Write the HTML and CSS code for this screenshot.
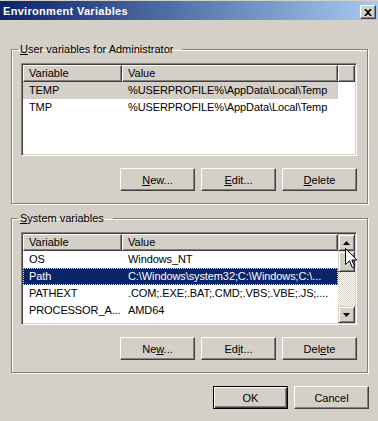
FILE: index.html
```html
<!DOCTYPE html>
<html lang="en">
<head>
    <meta charset="UTF-8">
    <title>Environment Variables</title>
    <link rel="stylesheet" href="styles.css">
</head>
<body>
    <div class="window">
        <div class="titlebar">
            <span class="title">Environment Variables</span>
            <span class="close">
                <svg width="8" height="7" viewBox="0 0 8 7"><path d="M0 0h2l2 2 2-2h2L5 3.5 8 7H6L4 5 2 7H0l3-3.5z" fill="#000"/></svg>
            </span>
        </div>

        <div class="content">
            <fieldset class="group">
                <legend><u>U</u>ser variables for Administrator</legend>
                <div class="list">
                    <div class="list-main">
                        <div class="head">
                            <div class="hcell c1">Variable</div>
                            <div class="hcell c2">Value</div>
                            <div class="hcell filler"></div>
                        </div>
                        <div class="row inactive">
                            <div class="cell c1">TEMP</div>
                            <div class="cell c2">%USERPROFILE%\AppData\Local\Temp</div>
                        </div>
                        <div class="row">
                            <div class="cell c1">TMP</div>
                            <div class="cell c2">%USERPROFILE%\AppData\Local\Temp</div>
                        </div>
                    </div>
                </div>
                <div class="buttons">
                    <button class="btn"><u>N</u>ew...</button>
                    <button class="btn"><u>E</u>dit...</button>
                    <button class="btn"><u>D</u>elete</button>
                </div>
            </fieldset>

            <fieldset class="group second">
                <legend><u>S</u>ystem variables</legend>
                <div class="list">
                    <div class="list-main">
                        <div class="head">
                            <div class="hcell c1">Variable</div>
                            <div class="hcell c2">Value</div>
                        </div>
                        <div class="row">
                            <div class="cell c1">OS</div>
                            <div class="cell c2">Windows_NT</div>
                        </div>
                        <div class="row selected">
                            <div class="cell c1">Path</div>
                            <div class="cell c2">C:\Windows\system32;C:\Windows;C:\...</div>
                        </div>
                        <div class="row">
                            <div class="cell c1">PATHEXT</div>
                            <div class="cell c2">.COM;.EXE;.BAT;.CMD;.VBS;.VBE;.JS;....</div>
                        </div>
                        <div class="row">
                            <div class="cell c1">PROCESSOR_A...</div>
                            <div class="cell c2">AMD64</div>
                        </div>
                    </div>
                    <div class="scrollbar">
                        <div class="sb-btn">
                            <svg width="7" height="4" viewBox="0 0 7 4"><path d="M3.5 0L7 4H0z" fill="#000"/></svg>
                        </div>
                        <div class="sb-thumb"></div>
                        <div class="sb-track"></div>
                        <div class="sb-btn">
                            <svg width="7" height="4" viewBox="0 0 7 4"><path d="M0 0h7L3.5 4z" fill="#000"/></svg>
                        </div>
                    </div>
                </div>
                <div class="buttons">
                    <button class="btn">Ne<u>w</u>...</button>
                    <button class="btn">Ed<u>i</u>t...</button>
                    <button class="btn">Del<u>e</u>te</button>
                </div>
            </fieldset>

            <div class="buttons dialog">
                <button class="btn default">OK</button>
                <button class="btn">Cancel</button>
            </div>
        </div>

        <svg class="cursor" width="13" height="21" viewBox="0 0 13 21">
            <path d="M0.5 0.5V16.5L4.5 12.8L7.3 19.5L9.6 18.5L6.9 12H11.8Z" fill="#fff" stroke="#000"/>
        </svg>
    </div>
</body>
</html>
```

FILE: styles.css
```css
body {
    margin: 0;
    background-color: #d4d0c8;
    font-family: "Liberation Sans", Arial, sans-serif;
    font-size: 11px;
    color: #000;
}
.window {
    position: relative;
    width: 378px;
    height: 421px;
    overflow: hidden;
}
.titlebar {
    display: flex;
    justify-content: space-between;
    align-items: center;
    height: 19px;
    margin-top: 1px;
    padding: 0 2px 0 3px;
    background: linear-gradient(to right, #0a246a, #a6caf0);
}
.title {
    color: #fff;
    font-weight: bold;
    letter-spacing: 0.3px;
}
.close {
    display: flex;
    align-items: center;
    justify-content: center;
    box-sizing: border-box;
    width: 16px;
    height: 14px;
    margin-top: 3px;
    background-color: #d4d0c8;
    border: 1px solid;
    border-color: #fff #404040 #404040 #fff;
    box-shadow: inset -1px -1px #808080;
}
.content {
    padding: 0 10px 0 11px;
}
.group {
    margin: 23px 0 0 0;
    padding: 7px 10px 12px 9px;
    border: 1px solid #808080;
    box-shadow: 1px 1px 0 #fff, inset 1px 1px 0 #fff;
}
.group.second {
    margin-top: 8px;
}
.group legend {
    margin-left: -3px;
    padding: 0 9px 0 2px;
    line-height: 13px;
}
.list {
    display: flex;
    box-sizing: border-box;
    height: 93px;
    background-color: #fff;
    border: 1px solid;
    border-color: #808080 #fff #fff #808080;
    box-shadow: inset 1px 1px #404040, inset -1px -1px #d4d0c8;
    padding: 1px;
    overflow: hidden;
}
.list-main {
    flex: 1;
    overflow: hidden;
}
.head {
    display: flex;
}
.hcell {
    box-sizing: border-box;
    height: 17px;
    line-height: 15px;
    padding-left: 5px;
    background-color: #d4d0c8;
    border: 1px solid;
    border-color: #fff #404040 #404040 #fff;
    box-shadow: inset -1px -1px #808080;
}
.hcell.filler {
    flex: 1;
}
.c1 {
    width: 99px;
    flex: none;
}
.c2 {
    width: 216px;
    flex: none;
}
.row {
    display: flex;
    width: 315px;
    height: 17px;
    box-sizing: border-box;
}
.cell {
    box-sizing: border-box;
    padding: 0 5px 0 6px;
    line-height: 17px;
    white-space: nowrap;
    overflow: hidden;
    letter-spacing: -0.1px;
}
.row.inactive {
    background-color: #d4d0c8;
}
.row.selected {
    background-color: #0a246a;
    color: #fff;
    outline: 1px dotted #f5db95;
    outline-offset: -1px;
}
.scrollbar {
    display: flex;
    flex-direction: column;
    width: 17px;
    flex: none;
}
.sb-btn,
.sb-thumb {
    display: flex;
    align-items: center;
    justify-content: center;
    box-sizing: border-box;
    height: 17px;
    background-color: #d4d0c8;
    border: 1px solid;
    border-color: #d4d0c8 #404040 #404040 #d4d0c8;
    box-shadow: inset 1px 1px #fff, inset -1px -1px #808080;
}
.sb-thumb {
    height: 21px;
}
.sb-track {
    flex: 1;
    background: repeating-conic-gradient(#fff 0 25%, #d4d0c8 0 50%) 0 0 / 2px 2px;
}
.buttons {
    display: flex;
    justify-content: flex-end;
    gap: 6px;
    margin-top: 12px;
}
.btn {
    box-sizing: border-box;
    width: 75px;
    height: 23px;
    padding: 0;
    font-family: inherit;
    font-size: 11px;
    color: #000;
    background-color: #d4d0c8;
    border: 1px solid;
    border-color: #fff #404040 #404040 #fff;
    box-shadow: inset -1px -1px #808080;
}
.btn.default {
    border-color: #000;
    box-shadow: inset 1px 1px #fff, inset -1px -1px #404040, inset -2px -2px #808080;
}
.dialog {
    margin-top: 13px;
    margin-right: -1px;
}
.cursor {
    position: absolute;
    left: 345px;
    top: 248px;
}
```
